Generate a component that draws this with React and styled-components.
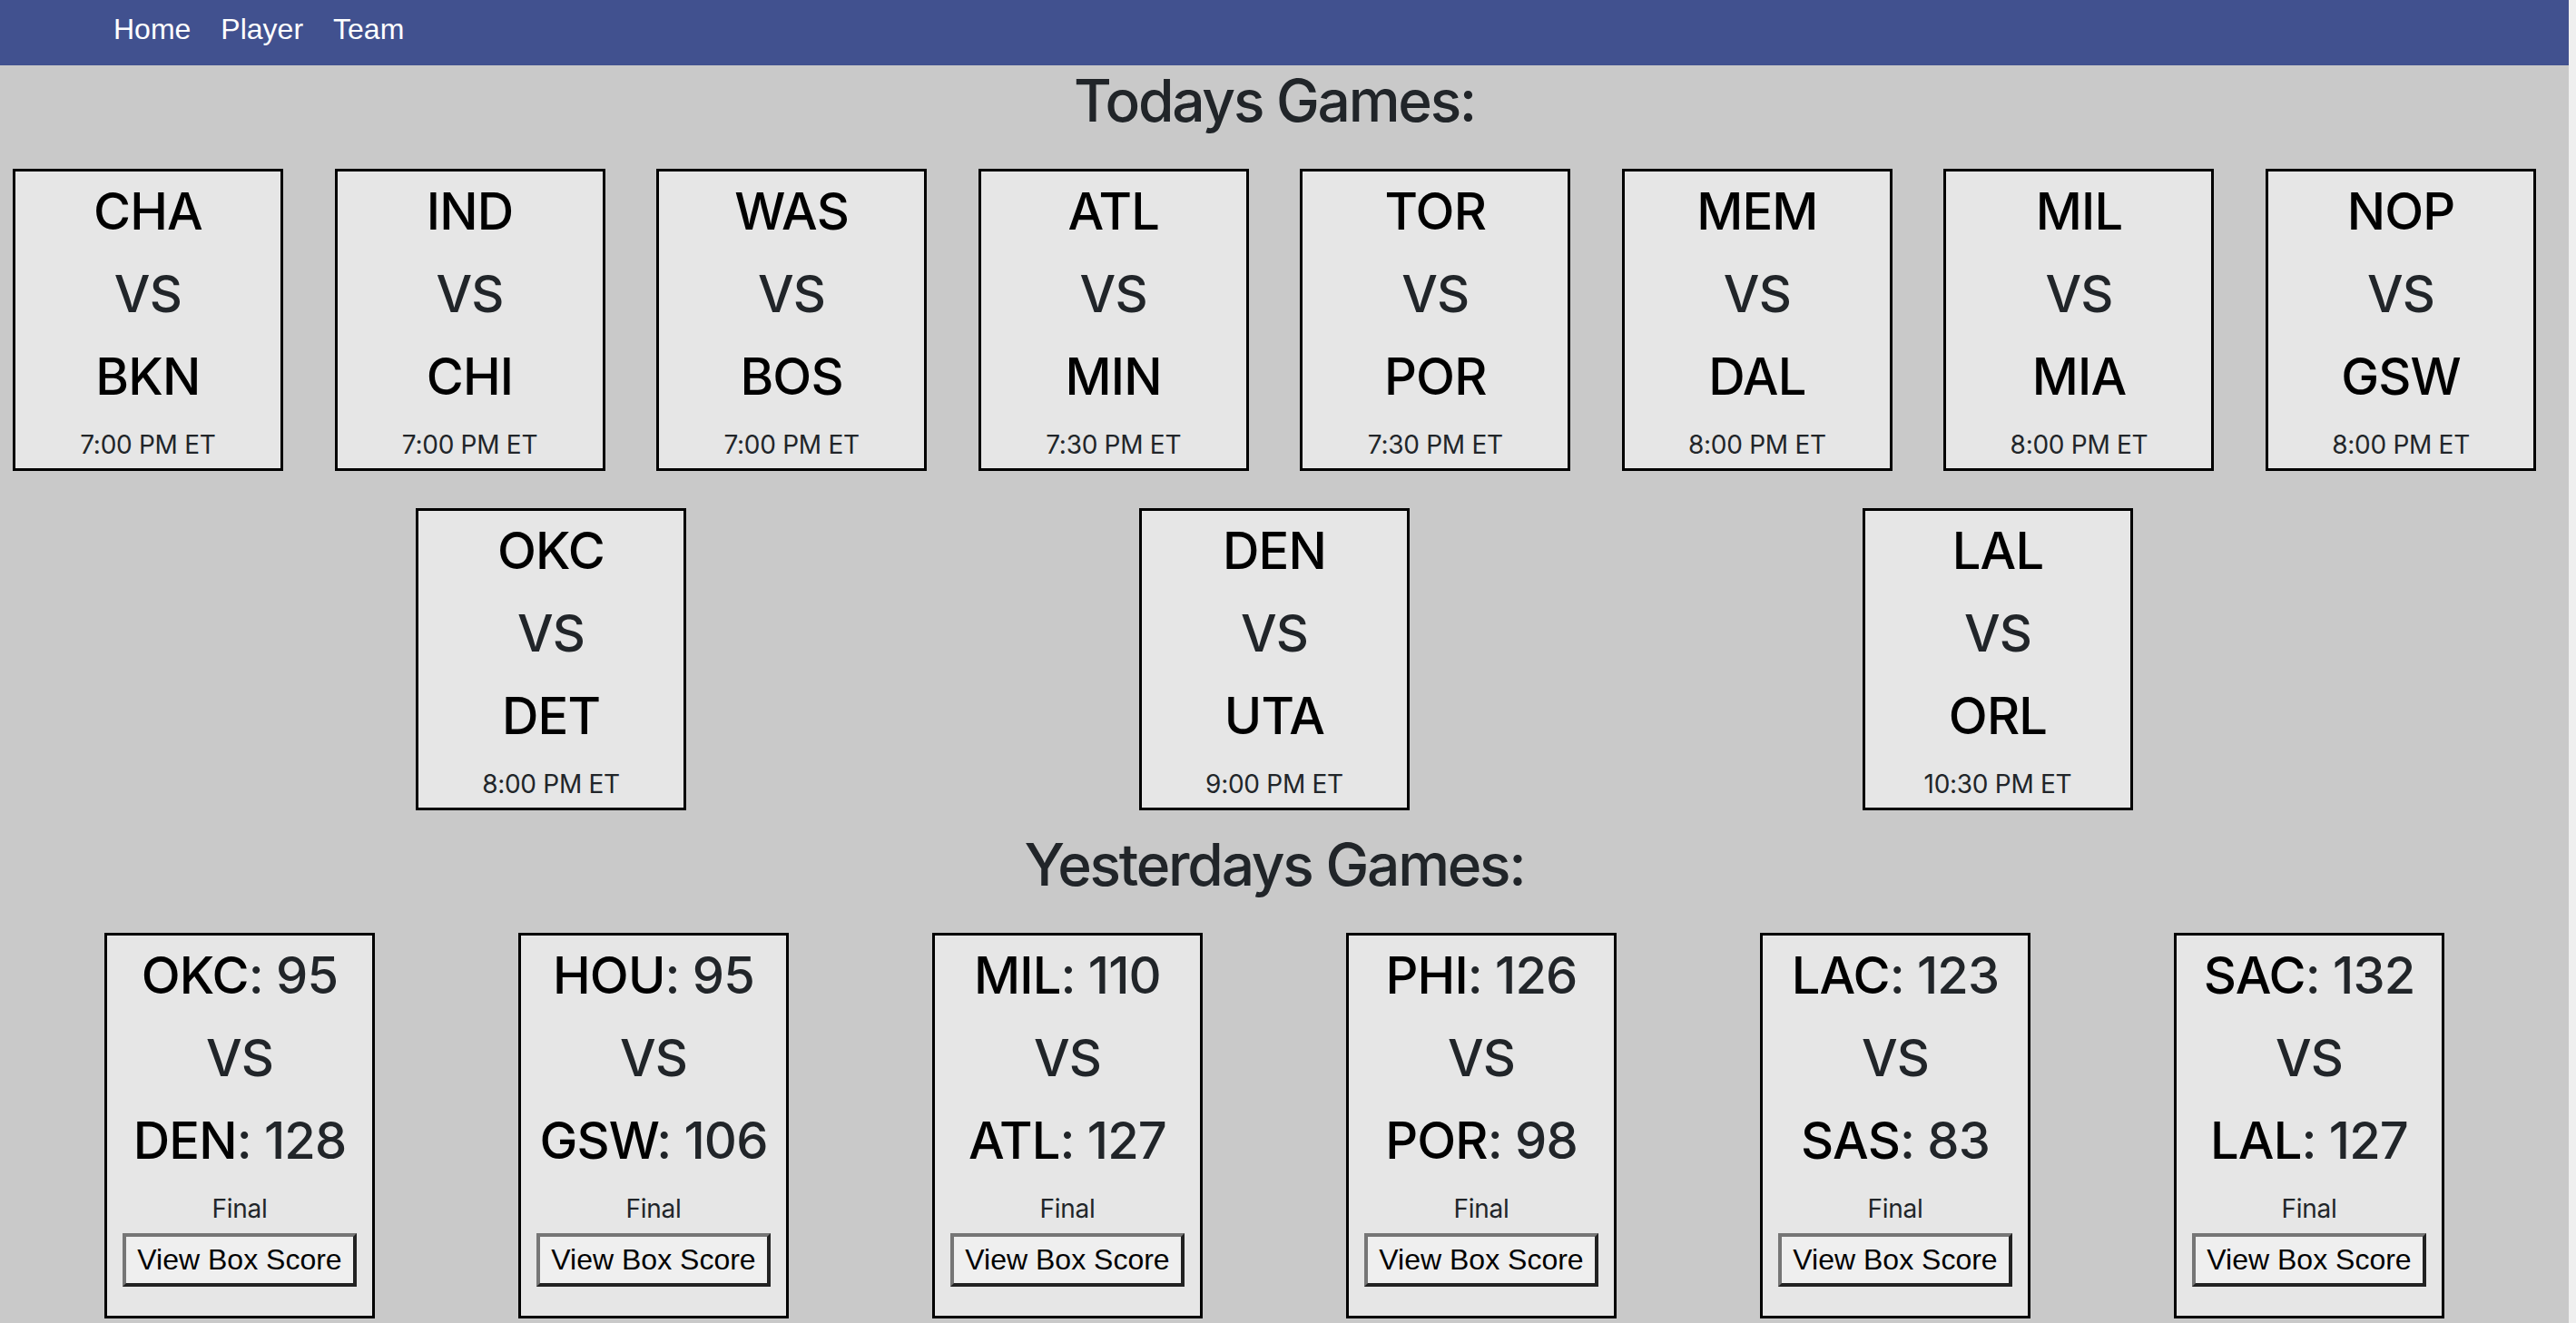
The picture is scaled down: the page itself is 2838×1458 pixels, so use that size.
import React from 'react';
import styled, { createGlobalStyle } from 'styled-components';

const GlobalStyle = createGlobalStyle`
  html {
    background: #efefef;
  }
  body {
    margin: 0 8px 0 0;
    min-height: 100vh;
    background: #c9c9c9;
    font-family: Inter, "Noto Sans", sans-serif;
    color: #212529;
  }
`;

const styles = {
  Navbar: styled.nav`
    box-sizing: border-box;
    height: 72px;
    padding: 8px 0 0 125px;
    background-color: #41518f;
    display: flex;
    gap: 33px;
  `,
  NavLink: styled.a`
    font-family: "Liberation Sans", Arial, sans-serif;
    font-size: 32px;
    line-height: 48px;
    color: #fff;
    text-decoration: none;
    cursor: pointer;
  `,
  Main: styled.main`
    width: 2808px;
  `,
  Heading: styled.h2`
    margin: 0 0 37px;
    font-size: 64px;
    font-weight: 500;
    line-height: 77px;
    letter-spacing: -0.035em;
    text-align: center;
    color: #212529;
  `,
  Row: styled.div`
    display: flex;
    justify-content: center;
    gap: ${props => props.$gap}px;
    margin-bottom: ${props => props.$mb || 0}px;
  `,
  Card: styled.div`
    box-sizing: border-box;
    width: 298px;
    padding: 11px 0 9px;
    border: 3px solid #000;
    background-color: #e6e6e6;
    display: flex;
    flex-direction: column;
    align-items: center;
    text-align: center;
  `,
  Line: styled.h3`
    margin: 0 0 24px;
    font-size: 56px;
    font-weight: 500;
    line-height: 67px;
    letter-spacing: -0.015em;
    color: #212529;
    white-space: nowrap;
  `,
  Team: styled.span`
    color: #000;
  `,
  Small: styled.p`
    margin: 0 0 ${props => props.$mb || 0}px;
    font-size: 28px;
    line-height: 34px;
    letter-spacing: -0.01em;
    color: #212529;
  `,
  BoxButton: styled.button`
    margin-bottom: 23px;
    padding: 6px 12px;
    font-family: "Liberation Sans", Arial, sans-serif;
    font-size: 32px;
    line-height: 39px;
    color: #000;
    background-color: #efefef;
    border: 4px solid;
    border-color: #767676 #222 #222 #767676;
    cursor: pointer;
  `
};

const today = [
  ['CHA', 'BKN', '7:00 PM ET'],
  ['IND', 'CHI', '7:00 PM ET'],
  ['WAS', 'BOS', '7:00 PM ET'],
  ['ATL', 'MIN', '7:30 PM ET'],
  ['TOR', 'POR', '7:30 PM ET'],
  ['MEM', 'DAL', '8:00 PM ET'],
  ['MIL', 'MIA', '8:00 PM ET'],
  ['NOP', 'GSW', '8:00 PM ET'],
  ['OKC', 'DET', '8:00 PM ET'],
  ['DEN', 'UTA', '9:00 PM ET'],
  ['LAL', 'ORL', '10:30 PM ET']
];

const yesterday = [
  ['OKC', 95, 'DEN', 128],
  ['HOU', 95, 'GSW', 106],
  ['MIL', 110, 'ATL', 127],
  ['PHI', 126, 'POR', 98],
  ['LAC', 123, 'SAS', 83],
  ['SAC', 132, 'LAL', 127]
];

const UpcomingGame = ({ home, away, time }) => (
  <styles.Card>
    <styles.Line><styles.Team>{home}</styles.Team></styles.Line>
    <styles.Line>VS</styles.Line>
    <styles.Line><styles.Team>{away}</styles.Team></styles.Line>
    <styles.Small>{time}</styles.Small>
  </styles.Card>
);

const FinishedGame = ({ g }) => (
  <styles.Card>
    <styles.Line><styles.Team>{g[0]}</styles.Team>: {g[1]}</styles.Line>
    <styles.Line>VS</styles.Line>
    <styles.Line><styles.Team>{g[2]}</styles.Team>: {g[3]}</styles.Line>
    <styles.Small $mb={10}>Final</styles.Small>
    <styles.BoxButton>View Box Score</styles.BoxButton>
  </styles.Card>
);

export default function App() {
  return (
    <>
      <GlobalStyle />
      <styles.Navbar>
        <styles.NavLink>Home</styles.NavLink>
        <styles.NavLink>Player</styles.NavLink>
        <styles.NavLink>Team</styles.NavLink>
      </styles.Navbar>
      <styles.Main>
        <styles.Heading>Todays Games:</styles.Heading>
        <styles.Row $gap={56.6} $mb={41}>
          {today.slice(0, 8).map(g => (
            <UpcomingGame key={g[0]} home={g[0]} away={g[1]} time={g[2]} />
          ))}
        </styles.Row>
        <styles.Row $gap={499} $mb={21}>
          {today.slice(8).map(g => (
            <UpcomingGame key={g[0]} home={g[0]} away={g[1]} time={g[2]} />
          ))}
        </styles.Row>
        <styles.Heading>Yesterdays Games:</styles.Heading>
        <styles.Row $gap={158}>
          {yesterday.map(g => <FinishedGame key={g[0]} g={g} />)}
        </styles.Row>
      </styles.Main>
    </>
  );
}
